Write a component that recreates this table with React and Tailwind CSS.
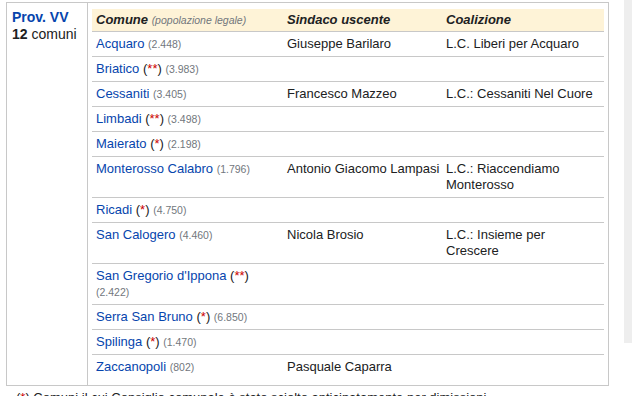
import React from "react";

const rows = [
  { name: "Acquaro", mark: "", pop: "2.448", sindaco: "Giuseppe Barilaro", coal: "L.C. Liberi per Acquaro" },
  { name: "Briatico", mark: "**", pop: "3.983", sindaco: "", coal: "" },
  { name: "Cessaniti", mark: "", pop: "3.405", sindaco: "Francesco Mazzeo", coal: "L.C.: Cessaniti Nel Cuore" },
  { name: "Limbadi", mark: "**", pop: "3.498", sindaco: "", coal: "" },
  { name: "Maierato", mark: "*", pop: "2.198", sindaco: "", coal: "" },
  { name: "Monterosso Calabro", mark: "", pop: "1.796", sindaco: "Antonio Giacomo Lampasi", coal: "L.C.: Riaccendiamo Monterosso" },
  { name: "Ricadi", mark: "*", pop: "4.750", sindaco: "", coal: "" },
  { name: "San Calogero", mark: "", pop: "4.460", sindaco: "Nicola Brosio", coal: "L.C.: Insieme per Crescere" },
  { name: "San Gregorio d'Ippona", mark: "**", pop: "2.422", sindaco: "", coal: "" },
  { name: "Serra San Bruno", mark: "*", pop: "6.850", sindaco: "", coal: "" },
  { name: "Spilinga", mark: "*", pop: "1.470", sindaco: "", coal: "" },
  { name: "Zaccanopoli", mark: "", pop: "802", sindaco: "Pasquale Caparra", coal: "" },
];

export default function App() {
  return (
    <div
      className="flex w-[632px] h-[396px] overflow-hidden bg-white text-[#202122]"
      style={{ fontFamily: '"Liberation Sans", Arial, sans-serif' }}
    >
      <div className="w-[624px] shrink-0 pl-[6px] pt-[2px]">
        <div className="flex w-[603px] border border-[#c8c8c8]">
          <div className="w-[80px] shrink-0 pl-[5px] pt-[6px] leading-[17px] text-[14px]">
            <div className="font-bold text-[#0645ad]">Prov. VV</div>
            <div>
              <span className="font-bold">12</span> comuni
            </div>
          </div>
          <div className="flex-1 border-l border-[#c8c8c8] px-[4px] pt-[6px] pb-[6px] text-[13px] leading-[16px]">
            <div className="grid grid-cols-[191px_159px_162px] bg-[#fef3d7] font-bold italic">
              <div className="px-[4px] py-[3px]">
                Comune{" "}
                <span className="font-normal text-[10.5px] text-[#72777d]">(popolazione legale)</span>
              </div>
              <div className="px-[4px] py-[3px]">Sindaco uscente</div>
              <div className="px-[4px] py-[3px]">Coalizione</div>
            </div>
            {rows.map((r) => (
              <div
                key={r.name}
                className="grid grid-cols-[191px_159px_162px] border-t border-[#c8c8c8]"
              >
                <div className="pl-[4px] pr-[2px] py-[4px]">
                  <span className="text-[#0645ad]">{r.name}</span>
                  {r.mark && (
                    <>
                      {" "}
                      (<span className="text-[#cc0000]">{r.mark}</span>)
                    </>
                  )}{" "}
                  <span className="text-[10.5px] text-[#72777d]">({r.pop})</span>
                </div>
                <div className="pl-[4px] pr-0 py-[4px] whitespace-nowrap">{r.sindaco}</div>
                <div className="pl-[4px] pr-[8px] py-[4px]">{r.coal}</div>
              </div>
            ))}
          </div>
        </div>
        <p className="mt-[4px] pl-[10px] text-[13px] leading-[16px] whitespace-nowrap">
          (<span className="text-[#cc0000]">*</span>) Comuni il cui Consiglio comunale è stato sciolto anticipatamente per dimissioni
        </p>
      </div>
      <div className="w-[8px] h-[343px] bg-[#eeeeee]" />
    </div>
  );
}
